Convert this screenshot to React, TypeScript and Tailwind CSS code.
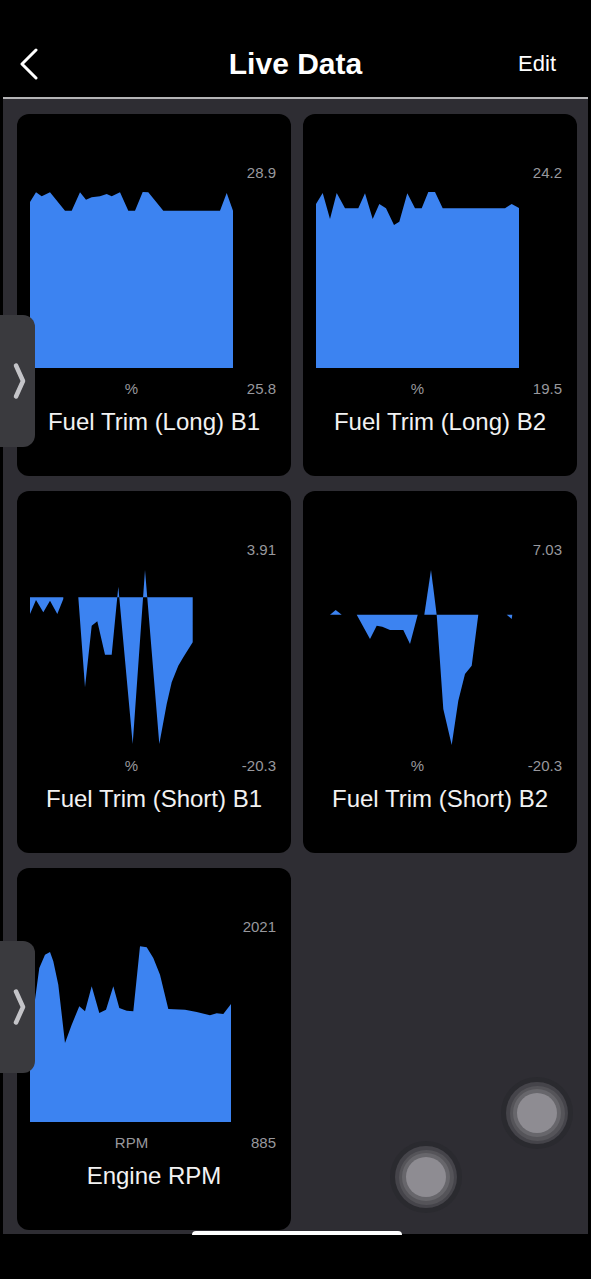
import React from "react"

type Chart = {
    title: string
    unit: string
    max: string
    min: string
    shapes: string[]
}

const charts: Chart[] = [
    {
        title: "Fuel Trim (Long) B1",
        unit: "%",
        max: "28.9",
        min: "25.8",
        shapes: [
            "0,10 6,0.3 11.7,4.3 20,0.3 35,18.7 41.7,18.7 50,0.3 56,7.7 61.7,5.3 70,4.3 76.7,2 81.7,4.3 90,0.3 98.3,18.7 105,18.7 112.7,0 118.3,0.3 133.3,18.7 190,18.7 196.7,1 203,18.7 203,176 0,176",
        ],
    },
    {
        title: "Fuel Trim (Long) B2",
        unit: "%",
        max: "24.2",
        min: "19.5",
        shapes: [
            "0,12 6.7,1 14,27 20.7,1 29,16.3 42.3,16.3 49,1.3 56.7,27 63.3,12 70,16.3 78,33 83.3,29.7 91.3,1.3 99,16.3 105.7,16.3 112.3,0 119,0 126.7,16.3 189,16.3 195.7,12 203,16 203,176 0,176",
        ],
    },
    {
        title: "Fuel Trim (Short) B1",
        unit: "%",
        max: "3.91",
        min: "-20.3",
        shapes: [
            "0,28.3 33.3,28.3 33.3,30 27.3,45 20,31.7 13.3,43.3 6,31 0,45",
            "48.3,28.3 55,118.3 61.7,56.7 67.3,52.3 75,85.7 81.7,85.7 88.3,17.7 102.7,175 115,1 129.3,175 136.7,135 141.7,113.3 148.3,96.7 153.3,88.3 162.7,73.3 162.7,28.3",
        ],
    },
    {
        title: "Fuel Trim (Short) B2",
        unit: "%",
        max: "7.03",
        min: "-20.3",
        shapes: [
            "14,45.7 19.7,41 25.7,45.7",
            "40.7,45.7 54,70 60.7,56.7 66.3,57.7 74,61 87.3,61 94,75 101.7,45.7",
            "108.3,45.7 115,1 120.7,45.7",
            "120.7,45.7 127.3,140 135.7,176 142.3,131.7 149,105 155.7,96.7 162.3,45.7",
            "190.7,45.7 196.3,45.7 195.7,50",
        ],
    },
    {
        title: "Engine RPM",
        unit: "RPM",
        max: "2021",
        min: "885",
        shapes: [
            "0,55.3 5,53.7 9.3,22 15,8.7 20,6 23.3,15.3 28.3,38.7 35,97 41.7,78.7 49.3,60.3 55,65.3 61.7,40.3 69.3,67 76,63.7 83.3,40.3 89.3,62 96.7,64.7 103.3,65.3 110,0.3 116.7,1.3 123.3,12 130,28.7 138.3,63 155,63.7 166.7,66 180,69.3 186.7,67.3 193.3,68 201,58 201,176 0,176",
        ],
    },
]

function ChartCard({ chart }: { chart: Chart }) {
    return (
        <div className="h-[362px] rounded-[12px] bg-black flex flex-col">
            <div className="pt-[50px] pr-[15px] text-right text-[15px] leading-[18px] text-[#98989d]">{chart.max}</div>
            <svg className="ml-[13px] mt-[10px] block" width="203" height="176" viewBox="0 0 203 176">
                {chart.shapes.map((pts, i) => (
                    <polygon key={i} points={pts} fill="#3c83f1" />
                ))}
            </svg>
            <div className="mt-[12px] flex text-[15px] leading-[18px] text-[#98989d]">
                <div className="ml-[13px] w-[203px] text-center">{chart.unit}</div>
                <div className="flex-1 pr-[15px] text-right">{chart.min}</div>
            </div>
            <div className="mt-[10px] text-center text-[24px] leading-[28px] text-[#f2f2f2]">{chart.title}</div>
        </div>
    )
}

function SideTab({ top }: { top: string }) {
    return (
        <div className={`absolute left-0 ${top} w-[35px] h-[132px] rounded-r-[12px] bg-[#3a3a3e] flex items-center justify-center pl-[3px]`}>
            <svg width="13" height="38" viewBox="0 0 13 38">
                <path d="M3 3.5 L10 19 L3 34.5" fill="none" stroke="#c4c4c8" strokeWidth="4.5" strokeLinecap="round" strokeLinejoin="round" />
            </svg>
        </div>
    )
}

function TouchDot({ pos }: { pos: string }) {
    return (
        <div className={`absolute ${pos} w-[72px] h-[72px] rounded-full bg-[#2a2a2f] flex items-center justify-center`}>
            <div className="w-[62px] h-[62px] rounded-full bg-[#45444a] flex items-center justify-center">
                <div className="w-[55px] h-[55px] rounded-full bg-[#555459] flex items-center justify-center">
                    <div className="w-[48px] h-[48px] rounded-full bg-[#67666b] flex items-center justify-center">
                        <div className="w-[40px] h-[40px] rounded-full bg-[#8e8c92]" />
                    </div>
                </div>
            </div>
        </div>
    )
}

export default function App() {
    return (
        <div
            className="relative w-[591px] h-[1279px] bg-black overflow-hidden flex flex-col"
            style={{ fontFamily: '"Liberation Sans", Arial, sans-serif' }}
        >
            <div className="mt-[40px] h-[48px] grid grid-cols-[1fr_auto_1fr] items-center px-[19px]">
                <svg width="20" height="32" viewBox="0 0 20 32">
                    <path d="M17 2 L3 16 L17 30" fill="none" stroke="#ffffff" strokeWidth="3" strokeLinecap="round" strokeLinejoin="round" />
                </svg>
                <div className="text-[30px] font-bold text-white leading-[34px]">Live Data</div>
                <div className="text-right pr-[16px] text-[22px] text-white leading-[26px]">Edit</div>
            </div>

            <div className="mt-[9px] mx-[3px] h-[2px] bg-[#b4b4b6]" />

            <div className="mx-[3px] h-[1135px] bg-[#2e2d33] pt-[15px] pl-[14px] pr-[11px] overflow-hidden">
                <div className="grid grid-cols-2 gap-x-[12px] gap-y-[15px]">
                    {charts.map((c) => (
                        <ChartCard key={c.title} chart={c} />
                    ))}
                </div>
            </div>

            <SideTab top="top-[315px]" />
            <SideTab top="top-[941px]" />

            <TouchDot pos="left-[501px] top-[1077px]" />
            <TouchDot pos="left-[390px] top-[1141px]" />

            <div className="absolute left-[192px] top-[1231px] w-[210px] h-[4px] rounded-t-full bg-white" />
        </div>
    )
}
